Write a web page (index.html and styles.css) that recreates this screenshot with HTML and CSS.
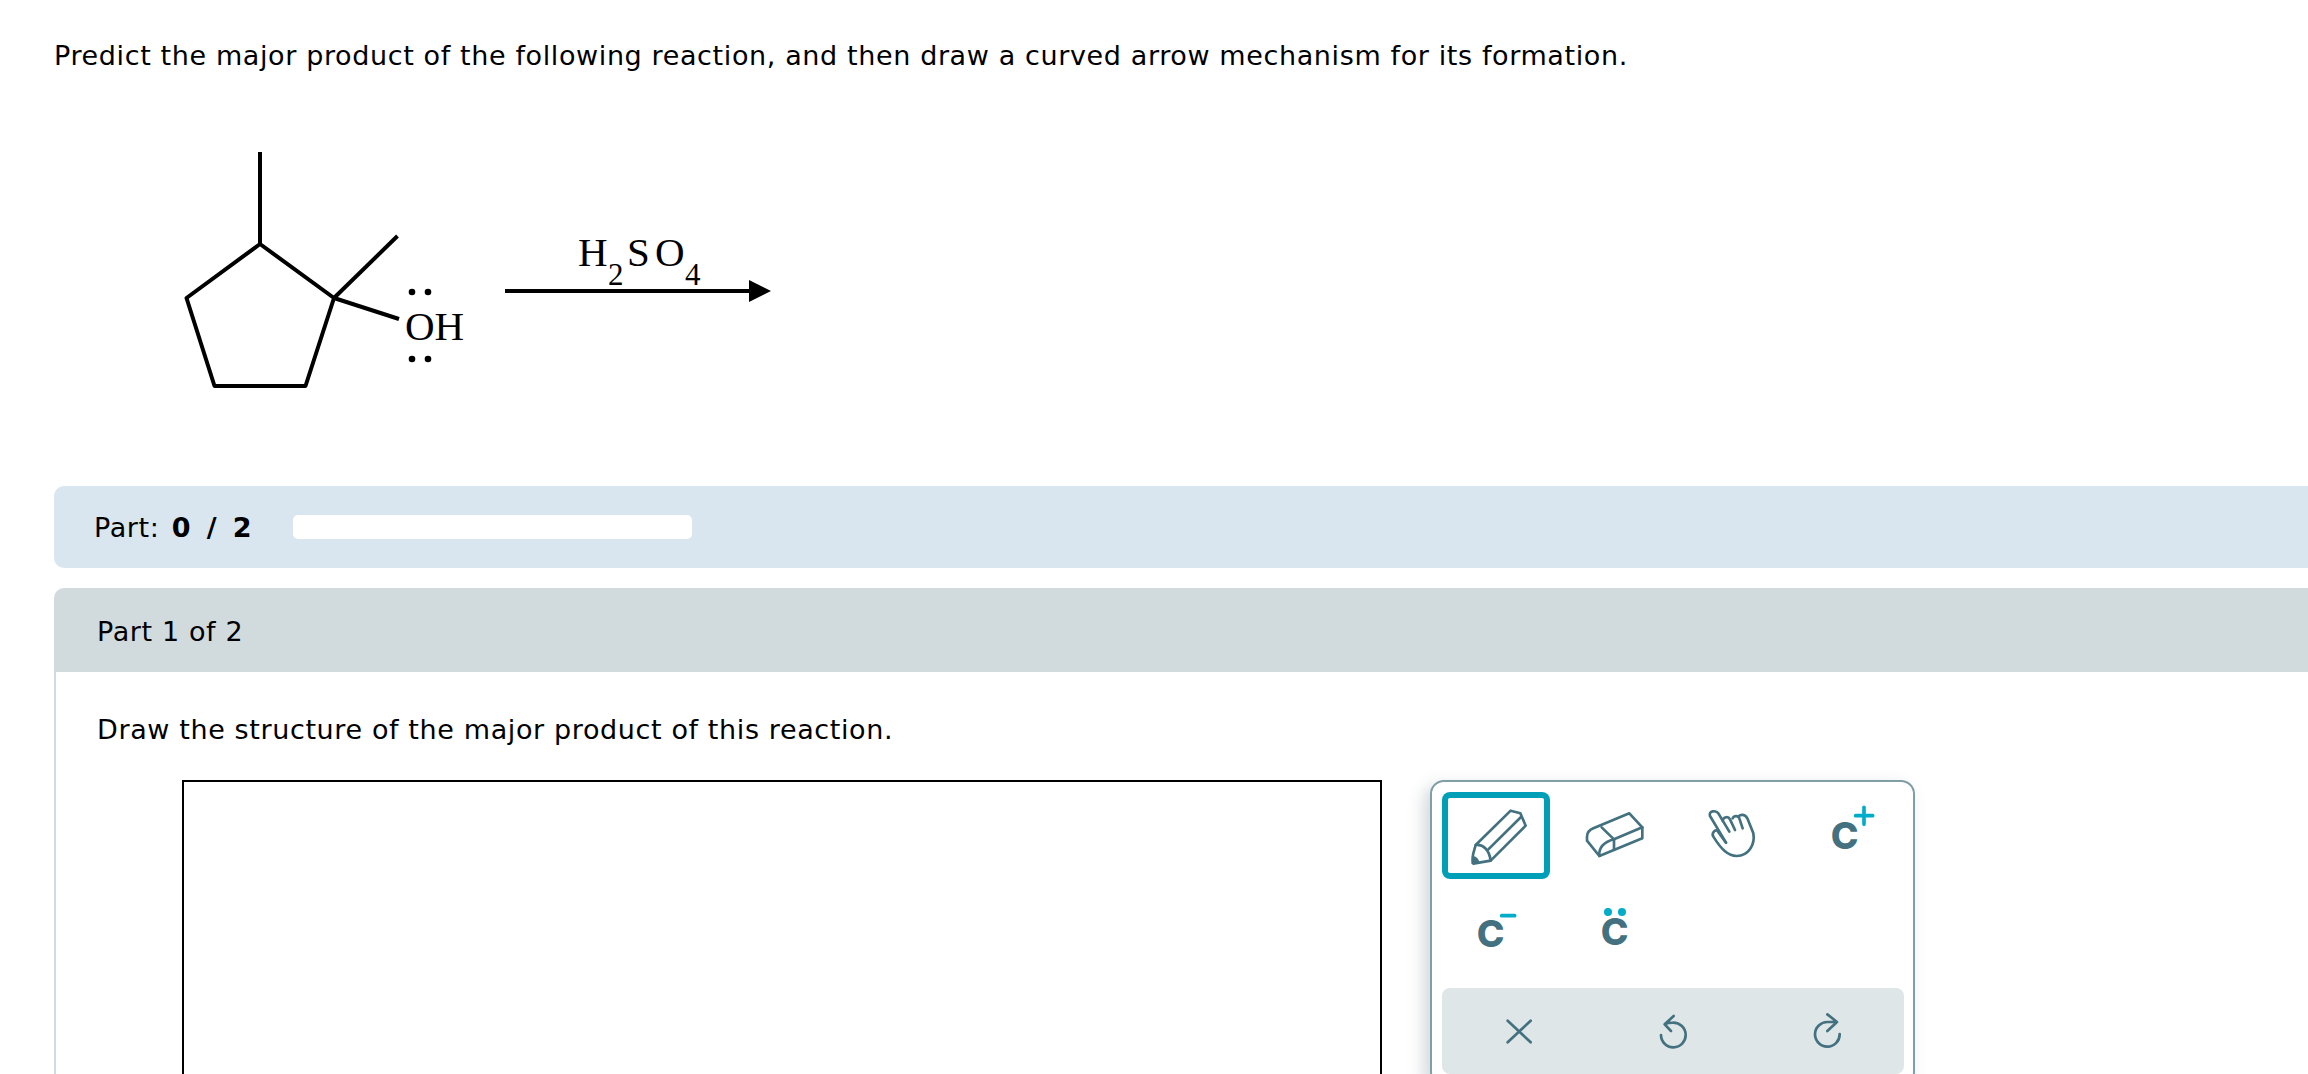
FILE: index.html
```html
<!DOCTYPE html>
<html>
  <head>
    <title>Organic chemistry question</title>
    <link rel="stylesheet" href="styles.css">
  </head>
  <body>
    <div class="page">
      <p class="question">Predict the major product of the following reaction, and then draw a curved arrow mechanism for its formation.</p>

      <svg class="reaction" width="760" height="414" viewBox="54 72 760 414">
        <g class="bonds">
          <path d="M260 152V244L334 298L305.500 386H214.500L186.500 298L260 244"/>
          <path d="M334 298L397.500 236"/>
          <path d="M334 298L399 319"/>
          <path d="M505 291H750"/>
        </g>
        <path d="M749 280L771 291L749 302Z"/>
        <circle cx="412" cy="292" r="3.300"/>
        <circle cx="428" cy="292" r="3.300"/>
        <circle cx="412" cy="359" r="3.300"/>
        <circle cx="428" cy="359" r="3.300"/>
        <text class="chem" x="405" y="340">OH</text>
        <text class="chem" x="578" y="266">H</text>
        <text class="chem-sub" x="608" y="285">2</text>
        <text class="chem" x="627" y="266">S</text>
        <text class="chem" x="655" y="266">O</text>
        <text class="chem-sub" x="685" y="285">4</text>
      </svg>

      <div class="score-bar">
        <span class="score">Part: <b>0 / 2</b></span>
        <div class="progress"></div>
      </div>

      <div class="card">
        <div class="card-head">Part 1 of 2</div>
        <div class="card-body">
          <p class="prompt">Draw the structure of the major product of this reaction.</p>
          <div class="workspace">
            <div class="canvas"></div>
            <div class="tools">
              <div class="tool-grid">
                <button class="tool selected" aria-label="Draw">
                  <svg class="tool-icon" viewBox="66 66 324 261">
                    <g class="line">
                      <path d="M160 281C155 272 158 262 160 250L167 225L272 122L301 130L317 167L212 272Z"/>
                      <path d="M167 225C190 222 208 240 212 272"/>
                      <path d="M205 238L303 141"/>
                    </g>
                    <path class="solid" d="M154 282L158 258C168 258 178 268 178 279Z"/>
                  </svg>
                </button>
                <button class="tool" aria-label="Erase">
                  <svg class="tool-icon" viewBox="420 66 324 261">
                    <g class="line">
                      <path d="M501 212V200C501 188 508 180 520 175L628 130L667 172V205L538 258Z"/>
                      <path d="M545 172L582 208L667 172"/>
                      <path d="M582 208V238"/>
                      <path d="M538 258C536 232 552 216 582 208"/>
                    </g>
                  </svg>
                </button>
                <button class="tool" aria-label="Move">
                  <svg class="tool-icon" viewBox="774 66 324 261">
                    <g class="line">
                      <path d="M918 218L870 138C865 122 888 120 895 130L928 185"/>
                      <path d="M908 152C910 140 925 138 930 148L945 180"/>
                      <path d="M938 145C942 136 955 136 958 145L968 175"/>
                      <path d="M955 140C962 132 975 132 982 145L1000 190C1006 225 985 258 950 258C925 258 905 240 880 200C874 190 884 178 892 182L918 218"/>
                    </g>
                  </svg>
                </button>
                <button class="tool" aria-label="Positive charge">
                  <svg class="tool-icon" viewBox="1128 66 324 261">
                    <text class="atom" x="1274" y="236">C</text>
                    <path class="accent" d="M1307 137H1358M1332 112V163"/>
                  </svg>
                </button>
                <button class="tool" aria-label="Negative charge">
                  <svg class="tool-icon" viewBox="66 345 324 261">
                    <text class="atom" x="212" y="531">C</text>
                    <path class="accent" d="M245 437H284"/>
                  </svg>
                </button>
                <button class="tool" aria-label="Lone pair">
                  <svg class="tool-icon" viewBox="420 345 324 261">
                    <text class="atom" x="584" y="525">C</text>
                    <circle class="dot" cx="564" cy="426" r="12"/>
                    <circle class="dot" cx="606" cy="426" r="12"/>
                  </svg>
                </button>
              </div>
              <div class="tool-footer">
                <button class="action" aria-label="Clear">
                  <svg class="action-icon" viewBox="225 714 144 144">
                    <path class="line" d="M263 755L332 820M332 755L263 820"/>
                  </svg>
                </button>
                <button class="action" aria-label="Undo">
                  <svg class="action-icon" viewBox="686 713 144 144">
                    <path class="line" d="M760 740L733 765L752 785M733 765C742 760 750 760 758 760A37 37 0 1 1 722 797"/>
                  </svg>
                </button>
                <button class="action" aria-label="Redo">
                  <svg class="action-icon" viewBox="1148 713 144 144">
                    <path class="line" d="M1221 735L1250 758L1221 785M1250 758H1222A37 37 0 1 0 1258 794"/>
                  </svg>
                </button>
              </div>
            </div>
          </div>
        </div>
      </div>
    </div>
  </body>
</html>
```

FILE: styles.css
```css
html, body { margin: 0; height: 100%; overflow: hidden; background: #fff; }
body { font-family: "DejaVu Sans", Verdana, sans-serif; font-size: 27px; letter-spacing: 0.62px; color: #000; }

.page { width: 2400px; height: 1074px; padding: 40px 0 0 54px; box-sizing: border-box; overflow: hidden; }
.question { margin: 0; line-height: 32px; }

.reaction { display: block; letter-spacing: 0; }
.bonds { fill: none; stroke: #000; stroke-width: 4; stroke-linejoin: round; }
.chem { font-family: "Liberation Serif", serif; font-size: 41px; }
.chem-sub { font-family: "Liberation Serif", serif; font-size: 31px; }

.score-bar { display: flex; align-items: center; height: 82px; padding-left: 40px; background: #d9e6ef; border-radius: 10px 0 0 10px; }
.score { word-spacing: 3px; }
.score b { letter-spacing: 1.4px; word-spacing: 4px; }
.progress { width: 399px; height: 24px; margin-left: 40px; background: #fff; border-radius: 5px; }

.card { margin-top: 20px; }
.card-head { display: flex; align-items: center; box-sizing: border-box; height: 84px; padding: 3px 0 0 43px; background: #d1dadd; border-radius: 10px 0 0 0; }
.card-body { padding: 40px 0 0 41px; border-left: 2px solid #d1dadd; }
.prompt { margin: 0; line-height: 36px; }

.workspace { display: flex; align-items: flex-start; margin: 32px 0 0 85px; }
.canvas { width: 1196px; height: 500px; border: 2px solid #000; flex: none; }

.tools { flex: none; width: 462px; margin-left: 48px; padding: 10px 9px 10px 10px; border: 2px solid #7f9ea6; border-radius: 14px; background: #fff; box-shadow: -6px 6px 16px rgba(70, 100, 110, 0.25); }
.tool-grid { display: grid; grid-template-columns: repeat(4, 108px); grid-auto-rows: 87px; column-gap: 10px; row-gap: 6px; }
.tool { display: block; padding: 0; background: none; border: none; border-radius: 8px; }
.tool.selected { box-shadow: inset 0 0 0 6px #009fb8; }
.tool-icon { display: block; width: 108px; height: 87px; }

.tool-footer { display: grid; grid-template-columns: repeat(3, 154px); height: 86px; margin-top: 16px; background: #dfe6e8; border-radius: 8px; }
.action { display: flex; align-items: center; justify-content: center; padding: 0; background: none; border: none; }
.action-icon { width: 48px; height: 48px; }

.line { fill: none; stroke: #43717f; stroke-width: 8; stroke-linecap: round; stroke-linejoin: round; }
.solid { fill: #43717f; }
.accent { fill: none; stroke: #00adc9; stroke-width: 11; stroke-linecap: round; }
.dot { fill: #00adc9; }
.atom { font-family: Inter, sans-serif; font-weight: 800; font-size: 112px; fill: #43717f; text-anchor: middle; letter-spacing: 0; }
```
